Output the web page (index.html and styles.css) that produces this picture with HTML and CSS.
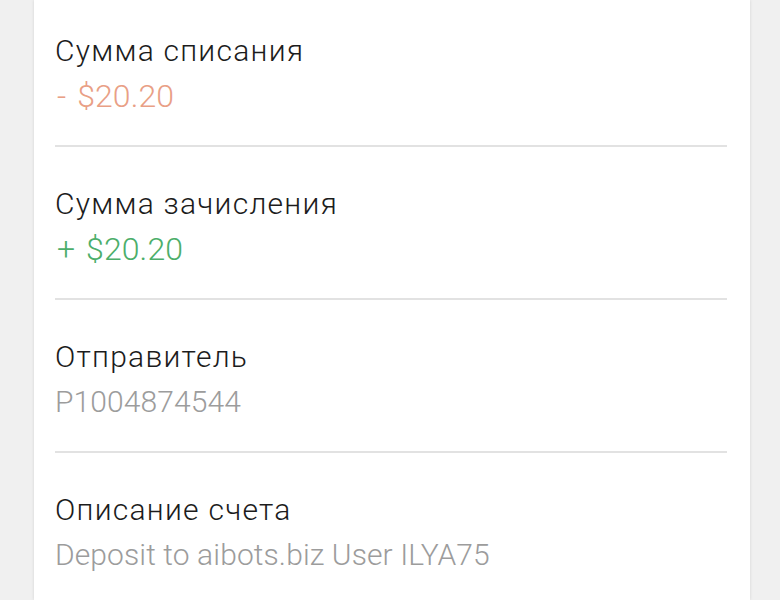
FILE: index.html
```html
<!DOCTYPE html>
<html lang="ru">
<head>
    <meta charset="UTF-8">
    <meta name="viewport" content="width=device-width, initial-scale=1.0">
    <title>Детали операции</title>
    <link rel="stylesheet" href="styles.css">
</head>
<body>
    <div class="card">
        <div class="row first">
            <div class="label">Сумма списания</div>
            <div class="value amount debit">- $20.20</div>
        </div>
        <div class="row">
            <div class="label">Сумма зачисления</div>
            <div class="value amount credit">+ $20.20</div>
        </div>
        <div class="row">
            <div class="label">Отправитель</div>
            <div class="value muted">P1004874544</div>
        </div>
        <div class="row last">
            <div class="label">Описание счета</div>
            <div class="value muted">Deposit to aibots.biz User ILYA75</div>
        </div>
    </div>
</body>
</html>
```

FILE: styles.css
```css
html, body {
    height: 100%;
}
body {
    margin: 0;
    background: #f0f0f0;
    font-family: Roboto, "Noto Sans", sans-serif;
    overflow: hidden;
}
.card {
    margin: 0 30px 0 34px;
    padding: 0 23px 0 21px;
    height: 100%;
    background: #fff;
    box-shadow: 0 0 3px rgba(0, 0, 0, 0.12);
}
.row {
    padding: 35px 0 26px;
    border-bottom: 2px solid #e2e2e2;
}
.row.first {
    padding-top: 29px;
}
.row.last {
    border-bottom: none;
}
.label {
    font-size: 30px;
    font-weight: 300;
    line-height: 44px;
    letter-spacing: 1.25px;
    color: #1c1c1c;
}
.value {
    font-size: 30px;
    font-weight: 300;
    line-height: 46px;
    letter-spacing: 0.1px;
}
.amount {
    font-size: 32px;
    word-spacing: 3px;
    padding-left: 2px;
}
.debit {
    color: #e99f86;
}
.credit {
    color: #4cae6a;
}
.muted {
    color: #9c9c9c;
}
```
